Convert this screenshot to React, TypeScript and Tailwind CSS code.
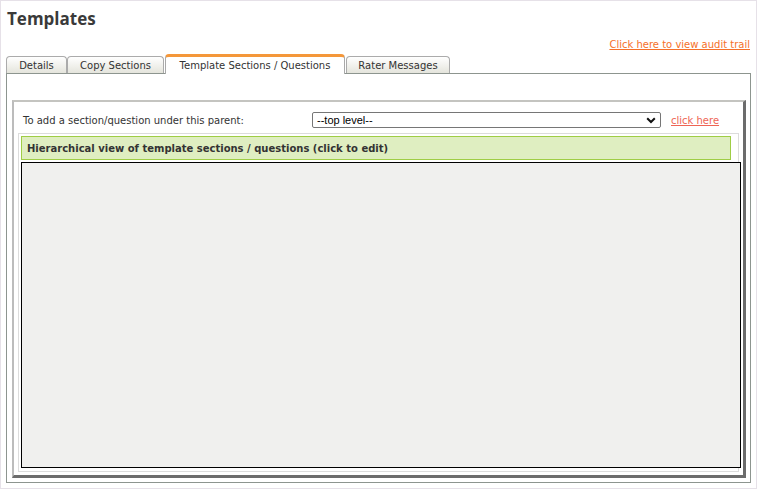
import React from "react";

const dv = { fontFamily: '"DejaVu Sans", Verdana, sans-serif' };

function Tab({ label, w, active, ml = 0 }: { label: string; w: number; active?: boolean; ml?: number }) {
  if (active) {
    return (
      <div
        className="relative z-10 flex h-[20px] items-center justify-center rounded-t-[4px] border-x border-t-[3px] border-x-[#a9a9a9] border-t-[#f4973a] bg-white text-[10px] text-[#333]"
        style={{ ...dv, width: w, marginLeft: ml }}
      >
        {label}
      </div>
    );
  }
  return (
    <div
      className="flex h-[18px] items-center justify-center rounded-t-[4px] border-x border-t border-[#ababab] bg-gradient-to-b from-white to-[#e3e3da] text-[10px] text-[#333]"
      style={{ ...dv, width: w, marginLeft: ml }}
    >
      {label}
    </div>
  );
}

export default function App() {
  return (
    <div className="flex h-[489px] w-[757px] flex-col border border-[#e6e1e8] bg-white px-[5px]" style={dv}>
      <div
        className="mt-[6px] pl-[1px] text-[17px] font-bold leading-[23px] text-[#3a3a3a]"
        style={{ fontFamily: '"Open Sans", sans-serif' }}
      >
        Templates
      </div>
      <div className="mt-[9px] flex justify-end pr-[1px]">
        <a href="#" className="text-[10px] leading-[12px] text-[#f5702a] underline underline-offset-[1px]">
          Click here to view audit trail
        </a>
      </div>
      <div className="mt-[3px] flex items-end">
        <Tab label="Details" w={61} />
        <Tab label="Copy Sections" w={97} />
        <Tab label="Template Sections / Questions" w={180} active ml={1} />
        <Tab label="Rater Messages" w={104} ml={1} />
      </div>
      <div className="-mt-[1px] flex h-[410px] flex-col border border-[#8d958f] bg-white pl-[5px] pr-[4px] pt-[26px] pb-[4px]">
        <div className="flex h-[378px] flex-col border-l-2 border-t-2 border-r-[3px] border-b-[3px] border-l-[#bcbcbc] border-t-[#c4c4c0] border-r-[#6c6c6c] border-b-[#6c6c6c]">
          <div className="mt-[10px] flex h-[16px] items-center">
            <div className="w-[298px] pl-[9px] text-[10px] text-[#333]">
              To add a section/question under this parent:
            </div>
            <div className="relative flex h-[16px] w-[349px] items-center rounded-[2px] border border-[#767676] bg-white pl-[4px]">
              <span className="text-[11px] text-black" style={{ fontFamily: '"Liberation Sans", Arial, sans-serif' }}>
                --top level--
              </span>
              <svg className="absolute right-[4px] top-[4px]" width="10" height="7" viewBox="0 0 10 7">
                <path d="M1.2 1.2 L5 5 L8.8 1.2" fill="none" stroke="#111" strokeWidth="2" />
              </svg>
            </div>
            <a href="#" className="ml-[10px] text-[10px] text-[#ee6454] underline underline-offset-[1px]">
              click here
            </a>
          </div>
          <div className="ml-[4px] mr-[4px] mt-[5px] flex h-[339px] flex-col border border-[#dcdcdc]">
            <div className="ml-[2px] mt-[2px] flex h-[24px] w-[710px] items-center border border-[#9fcd45] bg-[#dfeec1] pl-[5px] text-[10px] font-bold text-[#333]">
              Hierarchical view of template sections / questions (click to edit)
            </div>
            <div className="ml-[2px] mt-[2px] h-[306px] w-[720px] shrink-0 border border-black bg-[#f0f0ee]" />
          </div>
        </div>
      </div>
    </div>
  );
}
